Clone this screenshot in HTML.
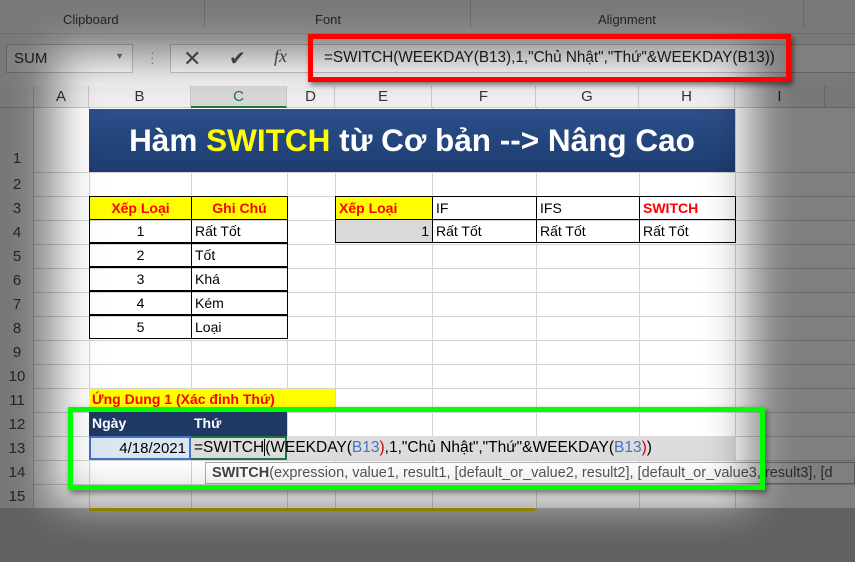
<!DOCTYPE html>
<html><head><meta charset="utf-8"><style>
*{margin:0;padding:0;box-sizing:border-box}
html,body{width:855px;height:562px;overflow:hidden}
body{background:#fff;font-family:"Liberation Sans",sans-serif;font-size:14px;color:#000}
#w{position:relative;width:855px;height:562px;overflow:hidden}
.a{position:absolute}
.vl{position:absolute;top:108px;height:400px;width:1px;background:#d4d4d4}
.hl{position:absolute;left:34px;width:821px;height:1px;background:#d4d4d4}
.rh{position:absolute;left:0;width:34px;text-align:center;color:#444;font-size:15px}
.ch{position:absolute;top:86px;height:22px;line-height:22px;text-align:center;color:#333;font-size:15px;border-right:1px solid #c8c8c8}
.c{position:absolute;height:24px;line-height:23px;border:1px solid #000;padding:0 3px;white-space:nowrap;overflow:hidden}
.y{background:#ffff00;color:#ff0000;font-weight:bold;text-align:center}
</style></head><body><div id="w">
<div class="a" style="left:0;top:0;width:855px;height:34px;background:#f3f3f3;border-bottom:1px solid #d8d8d8"></div>
<div class="a" style="left:63px;top:12px;font-size:13px;color:#444">Clipboard</div>
<div class="a" style="left:315px;top:12px;font-size:13px;color:#444">Font</div>
<div class="a" style="left:598px;top:12px;font-size:13px;color:#444">Alignment</div>
<div class="a" style="left:204px;top:0;width:1px;height:28px;background:#ccc"></div>
<div class="a" style="left:470px;top:0;width:1px;height:28px;background:#ccc"></div>
<div class="a" style="left:803px;top:0;width:1px;height:28px;background:#ccc"></div>
<div class="a" style="left:0;top:34px;width:855px;height:52px;background:#f3f3f3"></div>
<div class="a" style="left:6px;top:44px;width:127px;height:29px;background:#fff;border:1px solid #c6c6c6;padding:5px 7px;font-size:15px;color:#333">SUM<span style="position:absolute;right:8px;top:6px;font-size:9px;color:#777">▼</span></div>
<div class="a" style="left:150px;top:50px;color:#999;font-size:14px;line-height:5px">·<br>·<br>·</div>
<div class="a" style="left:170px;top:44px;width:140px;height:29px;background:#fff;border:1px solid #c6c6c6"></div>
<div class="a" style="left:183px;top:46px;font-size:22px;color:#555">✕</div>
<div class="a" style="left:229px;top:46px;font-size:20px;color:#555">✔</div>
<div class="a" style="left:274px;top:46px;font-size:18px;color:#555;font-family:'Liberation Serif',serif;font-style:italic">fx</div>
<div class="a" style="left:310px;top:44px;width:545px;height:29px;background:#fff;border-top:1px solid #c6c6c6;border-bottom:1px solid #c6c6c6"></div>
<div class="a" style="left:324px;top:49px;font-size:15.3px;color:#222">=SWITCH(WEEKDAY(B13),1,"Chủ Nhật","Thứ"&amp;WEEKDAY(B13))</div>
<div class="a" style="left:0;top:86px;width:855px;height:22px;background:#efefef;border-bottom:1px solid #c8c8c8"></div>
<div class="a" style="left:0;top:86px;width:34px;height:22px;border-right:1px solid #c8c8c8"></div>
<div class="ch" style="left:34px;width:55px">A</div>
<div class="ch" style="left:89px;width:102px">B</div>
<div class="ch" style="left:191px;width:96px;background:#d8d8d8;color:#217346;border-bottom:2px solid #217346">C</div>
<div class="ch" style="left:287px;width:48px">D</div>
<div class="ch" style="left:335px;width:97px">E</div>
<div class="ch" style="left:432px;width:104px">F</div>
<div class="ch" style="left:536px;width:103px">G</div>
<div class="ch" style="left:639px;width:96px">H</div>
<div class="ch" style="left:735px;width:90px">I</div>
<div class="a" style="left:0;top:108px;width:34px;height:400px;background:#efefef;border-right:1px solid #c8c8c8"></div>
<div class="rh" style="top:150px">1</div>
<div class="rh" style="top:176px">2</div><div class="rh" style="top:200px">3</div><div class="rh" style="top:224px">4</div><div class="rh" style="top:248px">5</div><div class="rh" style="top:272px">6</div><div class="rh" style="top:296px">7</div><div class="rh" style="top:320px">8</div><div class="rh" style="top:344px">9</div><div class="rh" style="top:368px">10</div><div class="rh" style="top:392px">11</div><div class="rh" style="top:416px">12</div><div class="rh" style="top:440px">13</div><div class="rh" style="top:464px">14</div><div class="rh" style="top:488px">15</div>
<div class="vl" style="left:89px"></div><div class="vl" style="left:191px"></div><div class="vl" style="left:287px"></div><div class="vl" style="left:335px"></div><div class="vl" style="left:432px"></div><div class="vl" style="left:536px"></div><div class="vl" style="left:639px"></div><div class="vl" style="left:735px"></div>
<div class="hl" style="top:172px"></div><div class="hl" style="top:196px"></div><div class="hl" style="top:220px"></div><div class="hl" style="top:244px"></div><div class="hl" style="top:268px"></div><div class="hl" style="top:292px"></div><div class="hl" style="top:316px"></div><div class="hl" style="top:340px"></div><div class="hl" style="top:364px"></div><div class="hl" style="top:388px"></div><div class="hl" style="top:412px"></div><div class="hl" style="top:436px"></div><div class="hl" style="top:460px"></div><div class="hl" style="top:484px"></div><div class="hl" style="top:508px"></div>
<div class="a" style="left:0;top:508px;width:855px;height:54px;background:#c0c0c0"></div>
<div class="a" style="left:89px;top:109px;width:646px;height:63px;background:linear-gradient(#2d4f8a,#24467e 50%,#1e3c70);color:#fff;font-weight:bold;font-size:31.5px;text-align:center;line-height:63px">Hàm <span style="color:#ffff00">SWITCH</span> từ Cơ bản --&gt; Nâng Cao</div>
<div class="c y" style="left:89px;top:196px;width:103px">Xếp Loại</div>
<div class="c y" style="left:191px;top:196px;width:97px">Ghi Chú</div>
<div class="c" style="left:89px;top:219px;width:103px;text-align:center">1</div><div class="c" style="left:191px;top:219px;width:97px">Rất Tốt</div>
<div class="c" style="left:89px;top:243px;width:103px;text-align:center">2</div><div class="c" style="left:191px;top:243px;width:97px">Tốt</div>
<div class="c" style="left:89px;top:267px;width:103px;text-align:center">3</div><div class="c" style="left:191px;top:267px;width:97px">Khá</div>
<div class="c" style="left:89px;top:291px;width:103px;text-align:center">4</div><div class="c" style="left:191px;top:291px;width:97px">Kém</div>
<div class="c" style="left:89px;top:315px;width:103px;text-align:center">5</div><div class="c" style="left:191px;top:315px;width:97px">Loại</div>
<div class="c y" style="left:335px;top:196px;width:98px;text-align:left">Xếp Loại</div>
<div class="c" style="left:432px;top:196px;width:105px">IF</div>
<div class="c" style="left:536px;top:196px;width:104px">IFS</div>
<div class="c" style="left:639px;top:196px;width:97px;color:#f00;font-weight:bold">SWITCH</div>
<div class="c" style="left:335px;top:219px;width:98px;background:#d9d9d9;text-align:right">1</div>
<div class="c" style="left:432px;top:219px;width:105px">Rất Tốt</div>
<div class="c" style="left:536px;top:219px;width:104px">Rất Tốt</div>
<div class="c" style="left:639px;top:219px;width:97px">Rất Tốt</div>
<div class="a" style="left:89px;top:389px;width:246px;height:23px;background:#ffff00;color:#f00;font-weight:bold;padding:2px 3px">Ứng Dung 1 (Xác đinh Thứ)</div>
<div class="a" style="left:89px;top:412px;width:102px;height:24px;background:#1f3864;color:#fff;font-weight:bold;padding:3px 3px">Ngày</div>
<div class="a" style="left:191px;top:412px;width:96px;height:24px;background:#1f3864;color:#fff;font-weight:bold;padding:3px 3px">Thứ</div>
<div class="a" style="left:191px;top:436px;width:545px;height:24px;background:#dcdcdc"></div>
<div class="a" style="left:89px;top:436px;width:102px;height:24px;background:#dce6f2;border:2px solid #4472c4;text-align:right;padding:2px 3px;font-size:15px">4/18/2021</div>
<div class="a" style="left:191px;top:436px;width:96px;height:24px;border:2px solid #217346;border-left:none"></div>
<div class="a" style="left:194px;top:439px;font-size:15.5px;white-space:nowrap">=SWITCH<span style="border-left:1px solid #000"></span>(WEEKDAY(<span style="color:#4472c4">B13</span><span style="color:#c00">)</span>,1,"Chủ Nhật","Thứ"&amp;WEEKDAY(<span style="color:#4472c4">B13</span><span style="color:#c00">)</span>)</div>
<div class="a" style="left:205px;top:462px;width:650px;height:22px;background:#fff;border:1px solid #aaa;padding:2px 6px;font-size:14.5px;color:#555;white-space:nowrap;overflow:hidden"><b style="color:#444">SWITCH</b>(expression, value1, result1, [default_or_value2, result2], [default_or_value3, result3], [d</div>
<div class="a" style="left:89px;top:508px;width:446px;height:3px;background:#c9b800"></div>
<svg class="a" style="left:0;top:0" width="855" height="562"><defs><filter id="b" x="-50%" y="-50%" width="200%" height="200%"><feGaussianBlur stdDeviation="22"/></filter></defs><path fill="#000" fill-opacity="0.5" fill-rule="evenodd" filter="url(#b)" d="M-300 -300H1155V862H-300Z M55 55H750V505H55Z"/></svg>
<div class="a" style="left:68px;top:407px;width:697px;height:83px;border:5px solid #00ff00;box-shadow:2px 3px 6px rgba(0,0,0,.5)"></div>
<div class="a" style="left:308px;top:34px;width:483px;height:48px;border:5px solid #ff0000;box-shadow:2px 3px 5px rgba(0,0,0,.5)"></div>
</div></body></html>
